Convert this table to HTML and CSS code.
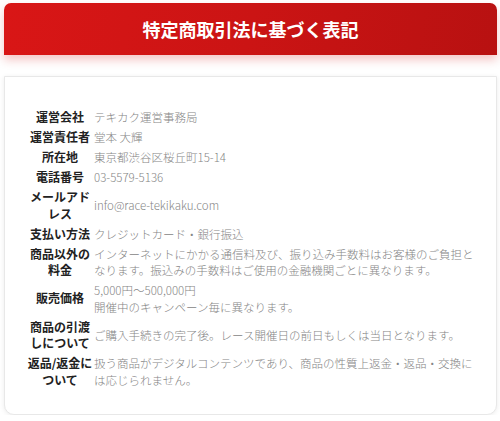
FILE: index.html
```html
<!DOCTYPE html>
<html lang="ja">
<head>
    <meta charset="UTF-8">
    <title>特定商取引法に基づく表記</title>
    <link rel="stylesheet" href="styles.css">
</head>
<body>
    <div class="page">
        <header class="title-bar">
            <h1>特定商取引法に基づく表記</h1>
        </header>

        <section class="card">
            <dl class="info">
                <dt>運営会社</dt>
                <dd>テキカク運営事務局</dd>

                <dt>運営責任者</dt>
                <dd>堂本 大輝</dd>

                <dt>所在地</dt>
                <dd>東京都渋谷区桜丘町15-14</dd>

                <dt>電話番号</dt>
                <dd>03-5579-5136</dd>

                <dt>メールアド<br>レス</dt>
                <dd>info@race-tekikaku.com</dd>

                <dt>支払い方法</dt>
                <dd>クレジットカード・銀行振込</dd>

                <dt>商品以外の<br>料金</dt>
                <dd>インターネットにかかる通信料及び、振り込み手数料はお客様のご負担となります。振込みの手数料はご使用の金融機関ごとに異なります。</dd>

                <dt>販売価格</dt>
                <dd>5,000円～500,000円<br>開催中のキャンペーン毎に異なります。</dd>

                <dt>商品の引渡<br>しについて</dt>
                <dd>ご購入手続きの完了後。レース開催日の前日もしくは当日となります。</dd>

                <dt>返品/返金に<br>ついて</dt>
                <dd>扱う商品がデジタルコンテンツであり、商品の性質上返金・返品・交換には応じられません。</dd>
            </dl>
        </section>
    </div>
</body>
</html>
```

FILE: styles.css
```css
body {
    margin: 0;
    padding: 0;
    background-color: #ffffff;
    font-family: "Noto Sans CJK JP", "Noto Sans", sans-serif;
}
.page {
    padding: 3px 3px 0 4px;
}
.title-bar {
    height: 52px;
    display: flex;
    align-items: center;
    justify-content: center;
    background: linear-gradient(100deg, #d91616 0%, #cb1414 50%, #b81111 100%);
    border-radius: 7px 7px 0 0;
    box-shadow: 0 5px 10px rgba(210, 30, 30, 0.25);
}
.title-bar h1 {
    margin: 0;
    color: #ffffff;
    font-size: 18px;
    font-weight: bold;
}
.card {
    margin-top: 21px;
    padding: 32px 17px 26px 22px;
    background-color: #ffffff;
    border: 1px solid #e8e8e8;
    border-radius: 0 0 10px 10px;
    box-shadow: 0 1px 5px rgba(0, 0, 0, 0.08);
}
.info {
    display: grid;
    grid-template-columns: 66px 1fr;
    column-gap: 1px;
    row-gap: 3.5px;
    align-items: center;
    margin: 0;
}
.info dt {
    text-align: center;
    font-size: 12px;
    font-weight: bold;
    line-height: 16.5px;
    color: #222222;
    white-space: nowrap;
}
.info dd {
    margin: 0;
    font-size: 11.5px;
    font-weight: 300;
    line-height: 16.5px;
    color: #858585;
}
```
